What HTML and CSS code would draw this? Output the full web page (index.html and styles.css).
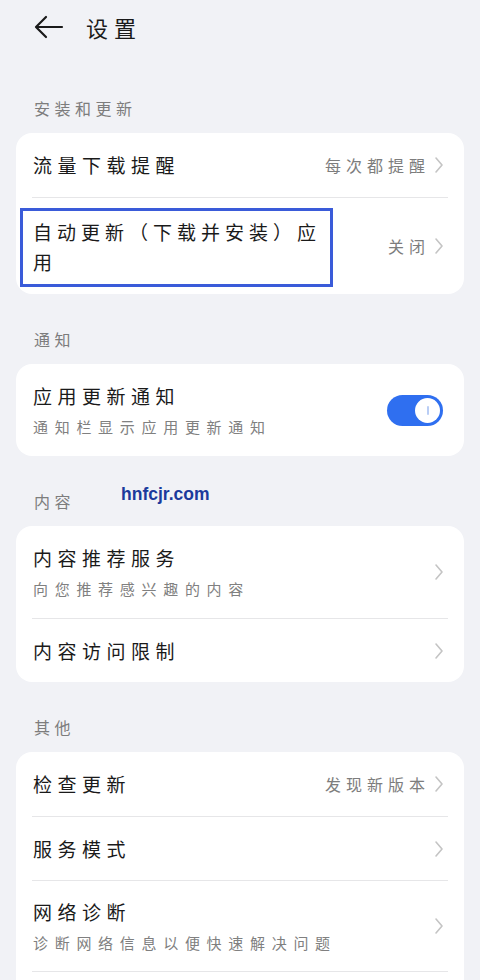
FILE: index.html
```html
<!DOCTYPE html>
<html lang="zh-CN">
<head>
<meta charset="utf-8">
<title>设置</title>
<link rel="stylesheet" href="styles.css">
</head>
<body>
<div class="page">
  <header class="topbar">
    <svg class="back" width="30" height="26" viewBox="0 0 30 26" aria-hidden="true">
      <path d="M28 13H3M12 3L2 13l10 10" fill="none" stroke="#1a1a1a" stroke-width="2.2" stroke-linecap="round" stroke-linejoin="round"/>
    </svg>
    <h1 class="title">设置</h1>
  </header>

  <div class="section-title first">安装和更新</div>
  <section class="card">
    <div class="row">
      <div class="main"><div class="label">流量下载提醒</div></div>
      <span class="value">每次都提醒</span>
      <svg class="chev" width="10" height="18" viewBox="0 0 10 18"><path d="M2 2l6 7-6 7" fill="none" stroke="#c4c4c4" stroke-width="1.6" stroke-linecap="round" stroke-linejoin="round"/></svg>
    </div>
    <div class="row tall">
      <div class="main narrow"><div class="label wrap">自动更新（下载并安装）应用</div></div>
      <span class="value">关闭</span>
      <svg class="chev" width="10" height="18" viewBox="0 0 10 18"><path d="M2 2l6 7-6 7" fill="none" stroke="#c4c4c4" stroke-width="1.6" stroke-linecap="round" stroke-linejoin="round"/></svg>
      <span class="mark"></span>
    </div>
  </section>

  <div class="section-title">通知</div>
  <section class="card">
    <div class="row double">
      <div class="main">
        <div class="label">应用更新通知</div>
        <div class="sub">通知栏显示应用更新通知</div>
      </div>
      <span class="switch on"><span class="knob"></span></span>
    </div>
  </section>

  <div class="section-title">内容<span class="watermark">hnfcjr.com</span></div>
  <section class="card">
    <div class="row double">
      <div class="main">
        <div class="label">内容推荐服务</div>
        <div class="sub">向您推荐感兴趣的内容</div>
      </div>
      <svg class="chev" width="10" height="18" viewBox="0 0 10 18"><path d="M2 2l6 7-6 7" fill="none" stroke="#c4c4c4" stroke-width="1.6" stroke-linecap="round" stroke-linejoin="round"/></svg>
    </div>
    <div class="row">
      <div class="main"><div class="label">内容访问限制</div></div>
      <svg class="chev" width="10" height="18" viewBox="0 0 10 18"><path d="M2 2l6 7-6 7" fill="none" stroke="#c4c4c4" stroke-width="1.6" stroke-linecap="round" stroke-linejoin="round"/></svg>
    </div>
  </section>

  <div class="section-title">其他</div>
  <section class="card open">
    <div class="row">
      <div class="main"><div class="label">检查更新</div></div>
      <span class="value">发现新版本</span>
      <svg class="chev" width="10" height="18" viewBox="0 0 10 18"><path d="M2 2l6 7-6 7" fill="none" stroke="#c4c4c4" stroke-width="1.6" stroke-linecap="round" stroke-linejoin="round"/></svg>
    </div>
    <div class="row">
      <div class="main"><div class="label">服务模式</div></div>
      <svg class="chev" width="10" height="18" viewBox="0 0 10 18"><path d="M2 2l6 7-6 7" fill="none" stroke="#c4c4c4" stroke-width="1.6" stroke-linecap="round" stroke-linejoin="round"/></svg>
    </div>
    <div class="row double">
      <div class="main">
        <div class="label">网络诊断</div>
        <div class="sub">诊断网络信息以便快速解决问题</div>
      </div>
      <svg class="chev" width="10" height="18" viewBox="0 0 10 18"><path d="M2 2l6 7-6 7" fill="none" stroke="#c4c4c4" stroke-width="1.6" stroke-linecap="round" stroke-linejoin="round"/></svg>
    </div>
  </section>
</div>
</body>
</html>
```

FILE: styles.css
```css
html, body {
  margin: 0;
  padding: 0;
  background: #f1f2f6;
}

body {
  font-family: "Noto Sans CJK SC", "Noto Sans", sans-serif;
  color: #1a1a1a;
  overflow: hidden;
}

.page {
  position: relative;
  padding: 0 16px;
}

/* top bar with back arrow and page title */
.topbar {
  height: 56px;
  display: flex;
  align-items: center;
  padding-left: 18px;
  padding-bottom: 2px;
  box-sizing: border-box;
}

.back {
  display: block;
}

.title {
  margin: 0 0 0 22px;
  font-size: 22px;
  font-weight: 400;
  letter-spacing: 6px;
  line-height: 28px;
}

/* grey captions above each group */
.section-title {
  position: relative;
  height: 70px;
  box-sizing: border-box;
  display: flex;
  align-items: flex-end;
  padding: 0 0 14px 18px;
  font-size: 16px;
  line-height: 22px;
  letter-spacing: 4.5px;
  color: #7d7d7d;
}

.section-title.first {
  height: 77px;
}

.watermark {
  position: absolute;
  left: 105px;
  top: 27px;
  font-family: "Liberation Sans", Arial, sans-serif;
  font-weight: 700;
  font-size: 17.5px;
  letter-spacing: 0;
  color: #1b3a9c;
}

/* white rounded group */
.card {
  background: #ffffff;
  border-radius: 16px;
  padding: 0 16px;
}

/* group that continues below the fold */
.card.open {
  padding-bottom: 40px;
}

.card.open .row:last-child {
  border-bottom: 1px solid #e6e6e8;
}

.row {
  position: relative;
  display: flex;
  align-items: center;
  height: 64px;
  box-sizing: border-box;
  border-top: 1px solid #e6e6e8;
}

.row:first-child {
  border-top: none;
}

.row.double {
  height: 92px;
}

.row.tall {
  height: 97px;
}

.main {
  flex: 1;
  min-width: 0;
  padding-left: 1px;
}

.main.narrow {
  flex: 0 0 300px;
  margin-right: auto;
}

.label {
  font-size: 19px;
  line-height: 26px;
  letter-spacing: 5.5px;
  white-space: nowrap;
}

.label.wrap {
  white-space: normal;
  line-height: 30px;
  letter-spacing: 5px;
  padding-top: 2px;
}

.sub {
  margin-top: 7px;
  font-size: 15px;
  line-height: 22px;
  letter-spacing: 6.7px;
  color: #808080;
  white-space: nowrap;
}

.value {
  font-size: 16px;
  letter-spacing: 5px;
  color: #7d7d7d;
  margin-right: 4px;
  white-space: nowrap;
}

.chev {
  display: block;
  flex: none;
  margin-right: 4px;
}

/* highlight frame drawn over the auto-update row */
.mark {
  position: absolute;
  left: -12px;
  top: 10px;
  width: 313px;
  height: 79px;
  box-sizing: border-box;
  border: 3px solid #3a5bd9;
  pointer-events: none;
}

/* toggle switch */
.switch {
  position: relative;
  flex: none;
  width: 56px;
  height: 31px;
  border-radius: 16px;
  background: #2f6ff0;
  margin-right: 5px;
}

.knob {
  position: absolute;
  right: 3px;
  top: 3px;
  width: 25px;
  height: 25px;
  border-radius: 50%;
  background: #ffffff;
}

.knob::after {
  content: "";
  position: absolute;
  left: 11.5px;
  top: 8px;
  width: 2px;
  height: 9px;
  border-radius: 1px;
  background: #b9cdf5;
}
```
